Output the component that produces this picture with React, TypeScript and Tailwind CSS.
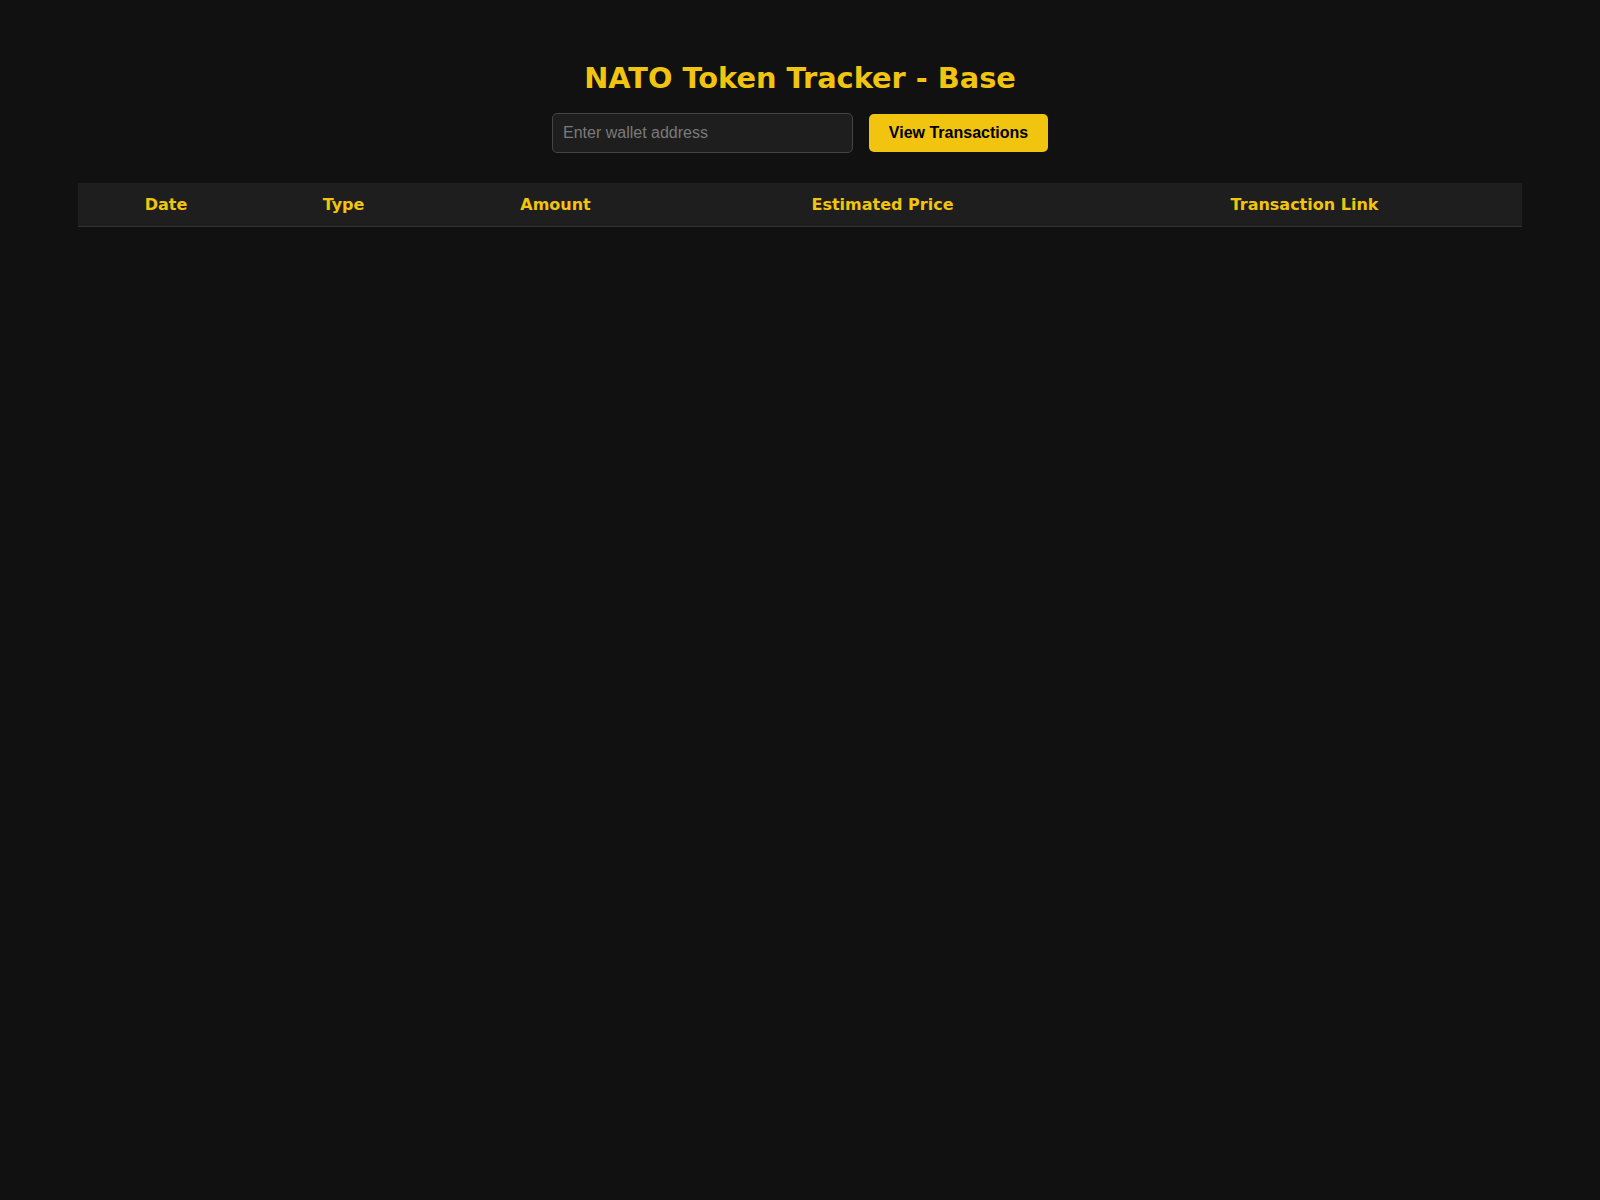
import React from "react";

export default function App() {
  const cols: [string, string][] = [
    ["Date", "w-[176px]"],
    ["Type", "w-[179px]"],
    ["Amount", "w-[245px]"],
    ["Estimated Price", "w-[409px]"],
    ["Transaction Link", "w-[435px]"],
  ];
  return (
    <div className="min-h-[1200px] w-full bg-[#111111] pt-[61px]" style={{ fontFamily: '"DejaVu Sans", Verdana, sans-serif' }}>
      <h1 className="text-center text-[28.8px] font-bold leading-[34px] text-[#f1c40f]">
        NATO Token Tracker - Base
      </h1>
      <div className="mt-[18px] flex h-[40px] items-center justify-center gap-[16px]">
        <input
          type="text"
          placeholder="Enter wallet address"
          className="h-[40px] w-[301px] rounded-[5px] border border-[#444444] bg-[#1e1e1e] px-[10px] text-[16px] text-white placeholder:text-[#7a7a7a] outline-none"
          style={{ fontFamily: '"Liberation Sans", Arial, sans-serif' }}
        />
        <button
          className="h-[38px] w-[179px] rounded-[5px] bg-[#f1c40f] text-[16px] font-bold text-black"
          style={{ fontFamily: '"Liberation Sans", Arial, sans-serif' }}
        >
          View Transactions
        </button>
      </div>
      <table className="mt-[30px] ml-[78px] w-[1444px] table-fixed border-collapse">
        <thead>
          <tr className="bg-[#1e1e1e]">
            {cols.map(([c, w]) => (
              <th
                key={c}
                className={`${w} border-b border-[#333333] px-[12px] py-[12px] text-center text-[16px] font-bold leading-[19px] text-[#f1c40f]`}
              >
                {c}
              </th>
            ))}
          </tr>
        </thead>
        <tbody></tbody>
      </table>
    </div>
  );
}
